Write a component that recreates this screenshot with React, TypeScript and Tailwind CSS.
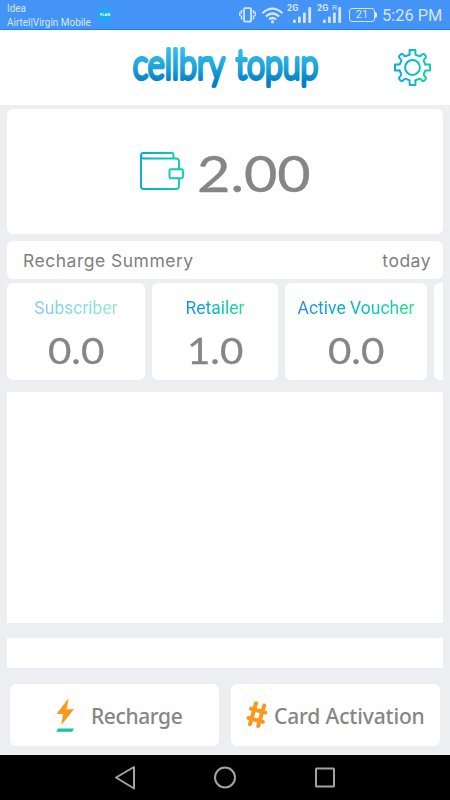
import type { ReactNode } from "react";

interface SummaryCardProps {
  title: string;
  value: string;
  className: string;
  titleClass?: string;
}

const SummaryCard = ({ title, value, className, titleClass = "" }: SummaryCardProps) => (
  <div className={`flex h-[97px] shrink-0 flex-col items-center rounded-md bg-white ${className}`}>
    <div
      className={`mt-[13px] bg-linear-to-r from-[#2188f5] to-[#28df88] bg-clip-text font-[Roboto,sans-serif] text-[17.5px] leading-6 whitespace-nowrap text-transparent ${titleClass}`}
    >
      {title}
    </div>
    <div className="mt-[8px] scale-x-[1.12] font-[Lato,sans-serif] text-[36px] leading-[44px] text-[#868686] [-webkit-text-stroke:0.3px_#868686]">
      {value}
    </div>
  </div>
);

interface ActionButtonProps {
  icon: ReactNode;
  label: string;
  className: string;
}

const ActionButton = ({ icon, label, className }: ActionButtonProps) => (
  <button
    type="button"
    className={`flex h-[62px] w-[209px] items-center rounded-md bg-white font-['Noto_Sans',sans-serif] text-[21px] font-medium whitespace-nowrap text-[#868686] ${className}`}
  >
    {icon}
    <span className="pt-[3px]">{label}</span>
  </button>
);

const SignalIcon = ({ roaming = false }: { roaming?: boolean }) => (
  <svg width="27" height="22" viewBox="0 0 27 22" fill="#d5e6fd">
    <text x="0" y="8" fontFamily="Roboto, sans-serif" fontSize="9" fontWeight="700">2G</text>
    {roaming && <text x="15" y="7" fontFamily="Roboto, sans-serif" fontSize="8">R</text>}
    <rect x="6" y="16.5" width="2.8" height="3.5" rx="1" />
    <rect x="11" y="13.5" width="2.8" height="6.5" rx="1" />
    <rect x="16" y="9.5" width="2.8" height="10.5" rx="1" />
    <rect x="21.3" y="4" width="2.8" height="16" rx="1" />
  </svg>
);

const StatusBar = () => (
  <div className="flex h-[30px] border-b border-[#1b84ec] bg-[#4494f8] font-[Roboto,sans-serif] text-[#d5e6fd]">
    <div className="w-[98px] pt-[2px] pl-[7px] text-[10px] leading-[13.5px] tracking-[-0.03px] whitespace-nowrap">
      <div>Idea</div>
      <div>Airtel|Virgin Mobile</div>
    </div>
    <div className="mt-2 flex h-[14px] w-[14px] items-center justify-center rounded-[3px] bg-[#22a7f2] text-[4px] font-bold text-white">
      FLAN
    </div>
    <svg className="mt-[7px] ml-[127px]" width="17" height="16" fill="none" stroke="#d5e6fd">
      <rect x="5" y="1.2" width="7" height="13.5" rx="1" strokeWidth="1.8" />
      <path d="M2.5 3v3.2M2.5 8.5v4M.8 4.8v4.5M14.5 3v3.2M14.5 8.5v4M16.2 4.8v4.5" strokeWidth="1.4" />
    </svg>
    <svg className="mt-[7px] ml-[5px]" width="23" height="17" fill="none" stroke="#d5e6fd" strokeWidth="2.2">
      <path d="M1.5 6.2Q11.5-2.8 21.5 6.2M4.8 9.5Q11.5 3.5 18.2 9.5M8 12.5Q11.5 9.5 15 12.5" />
      <circle cx="11.5" cy="14.8" r="1" strokeWidth="1.2" fill="#d5e6fd" />
    </svg>
    <div className="mt-[3px] ml-[3px]"><SignalIcon /></div>
    <div className="mt-[3px] ml-[3px]"><SignalIcon roaming /></div>
    <div className="mt-2 ml-[5px] flex h-[14px] w-[26px] items-center justify-center rounded-[3px] border-[1.5px] border-[#d5e6fd] text-[11px]">
      21
    </div>
    <div className="mt-[12px] h-[6px] w-[2px] rounded-r bg-[#d5e6fd]" />
    <div className="mt-[6px] ml-[5px] text-[16.4px] leading-5 whitespace-nowrap">5:26 PM</div>
  </div>
);

const Logo = () => (
  <svg className="ml-[120px] overflow-visible" width="210" height="75" viewBox="0 0 210 75">
    <defs>
      <linearGradient id="logo" gradientUnits="userSpaceOnUse" x1="0" y1="16" x2="0" y2="58">
        <stop offset="0" stopColor="#38c2ec" />
        <stop offset="0.5" stopColor="#1da5d9" />
        <stop offset="0.85" stopColor="#0580c5" />
      </linearGradient>
    </defs>
    <g
      transform="scale(0.77 1)"
      fontFamily="Lato, sans-serif"
      fontSize="42"
      fontWeight="300"
      fill="url(#logo)"
      stroke="url(#logo)"
      strokeWidth="4"
      strokeLinejoin="round"
    >
      <text x="16.5" y="49" textLength="119.5" lengthAdjust="spacingAndGlyphs">cellbry</text>
      <text x="150.5" y="49" textLength="107" lengthAdjust="spacingAndGlyphs">topup</text>
    </g>
  </svg>
);

// one quarter of the gear outline, turned around the centre
const gearQuarter =
  "M16.6 6.6V2H22.4V6.6L26 8.2Q27.2 8.7 28.3 7.2Q29.8 5 32 7Q34 9.2 31.8 10.7Q30.3 11.8 30.8 13L32.4 16.6";

const GearIcon = () => (
  <svg width="39" height="39" viewBox="0 0 39 39" fill="none">
    <defs>
      <linearGradient id="teal">
        <stop offset="0" stopColor="#08a9dc" />
        <stop offset="1" stopColor="#0bd3a8" />
      </linearGradient>
      <mask id="gear" maskUnits="userSpaceOnUse" x="0" y="0" width="39" height="39">
        <g stroke="white" strokeWidth="2" strokeLinejoin="round" strokeLinecap="round">
          <circle cx="19.5" cy="19.5" r="7.4" />
          {[0, 90, 180, 270].map((angle) => (
            <path key={angle} d={gearQuarter} transform={`rotate(${angle} 19.5 19.5)`} />
          ))}
        </g>
      </mask>
    </defs>
    <rect width="39" height="39" fill="url(#teal)" mask="url(#gear)" />
  </svg>
);

const WalletIcon = () => (
  <svg width="45" height="40" viewBox="0 0 45 40" fill="none" stroke="url(#wallet)" strokeWidth="1.9" strokeLinejoin="round">
    <defs>
      <linearGradient id="wallet" gradientUnits="userSpaceOnUse" x1="0" y1="0" x2="45" y2="0">
        <stop offset="0" stopColor="#08a9dc" />
        <stop offset="1" stopColor="#0bd3a8" />
      </linearGradient>
    </defs>
    <path d="M34.5 7.5V3.5Q34.5 2 33 2H4.5Q2 2 2 4.5Q2 7.5 4.5 7.5H37Q40 7.5 40 10.5V18M40 27.5V35Q40 38 37 38H4.5Q2 38 2 35.5V4.5" />
    <rect x="30.5" y="18.3" width="13.5" height="9" rx="1.5" />
  </svg>
);

const BoltIcon = () => (
  <svg className="mr-[17px] ml-[46px]" width="18" height="36" viewBox="0 0 18 36">
    <path d="M12.8 1L.5 17H7L5.3 28 18 12.2H10.5Z" fill="#f9981c" />
    <path d="M2 31.5H18L16.2 34.8H.2Z" fill="#12c798" />
  </svg>
);

const HashIcon = () => (
  <svg className="mr-[6px] ml-[15px]" width="22" height="30" viewBox="0 0 22 30" fill="none" stroke="#f9981c" strokeWidth="4" strokeLinecap="round">
    <path d="M10 3.2L4 24.2M18.2 5.5L12.2 26M5 8.7L19.3 12.5M2.5 18L16.8 21.8" />
  </svg>
);

export default function App() {
  return (
    <div className="flex h-[800px] w-[450px] flex-col overflow-hidden bg-[#edeef2]">
      <StatusBar />
      <header className="flex h-[75px] shrink-0 bg-white">
        <Logo />
        <div className="mt-[18px] ml-[63px]"><GearIcon /></div>
      </header>

      <main className="flex flex-col px-[7px] pt-1">
        {/* Balance */}
        <section className="flex h-[125px] rounded-md bg-white pl-[132px]">
          <div className="mt-[42px]"><WalletIcon /></div>
          <div className="mt-[34px] ml-[13px] origin-left scale-x-[1.14] font-[Lato,sans-serif] text-[50.5px] leading-[60px] text-[#868686] [-webkit-text-stroke:0.4px_#868686]">
            2.00
          </div>
        </section>

        <section className="mt-[7px] flex h-[38px] items-center justify-between rounded-md bg-white pt-[2px] pr-3 pl-4 font-[Inter,sans-serif] text-[17.5px] tracking-[0.5px] text-[#808080]">
          <span>Recharge Summery</span>
          <span>today</span>
        </section>

        {/* Recharge counters, scrolled sideways */}
        <section className="mt-[3.5px] flex overflow-hidden">
          <SummaryCard title="Subscriber" value="0.0" className="mr-[7px] w-[138px]" titleClass="opacity-50" />
          <SummaryCard title="Retailer" value="1.0" className="mr-[7px] w-[126px]" />
          <SummaryCard title="Active Voucher" value="0.0" className="mr-[7px] w-[142px]" />
          <div className="h-[97px] w-[125px] shrink-0 rounded-md bg-white" />
        </section>

        <section className="mt-[12.5px] h-[231px] bg-white" />
        <section className="mt-[15px] h-[30px] bg-white" />
      </main>

      <div className="mt-4 flex gap-3 pl-[10px]">
        <ActionButton label="Recharge" className="tracking-[-0.4px]" icon={<BoltIcon />} />
        <ActionButton label="Card Activation" className="tracking-[-0.15px]" icon={<HashIcon />} />
      </div>

      <nav className="mt-[9px] h-[45px] shrink-0 bg-black">
        <svg className="mx-auto" width="224" height="45" fill="none" stroke="#a3a3a3" strokeWidth="2">
          <path d="M21 12V33.5L3 22.5Z" strokeLinejoin="round" />
          <circle cx="112" cy="22.5" r="10" />
          <rect x="203" y="13.5" width="18" height="18" rx="0.5" />
        </svg>
      </nav>
    </div>
  );
}
